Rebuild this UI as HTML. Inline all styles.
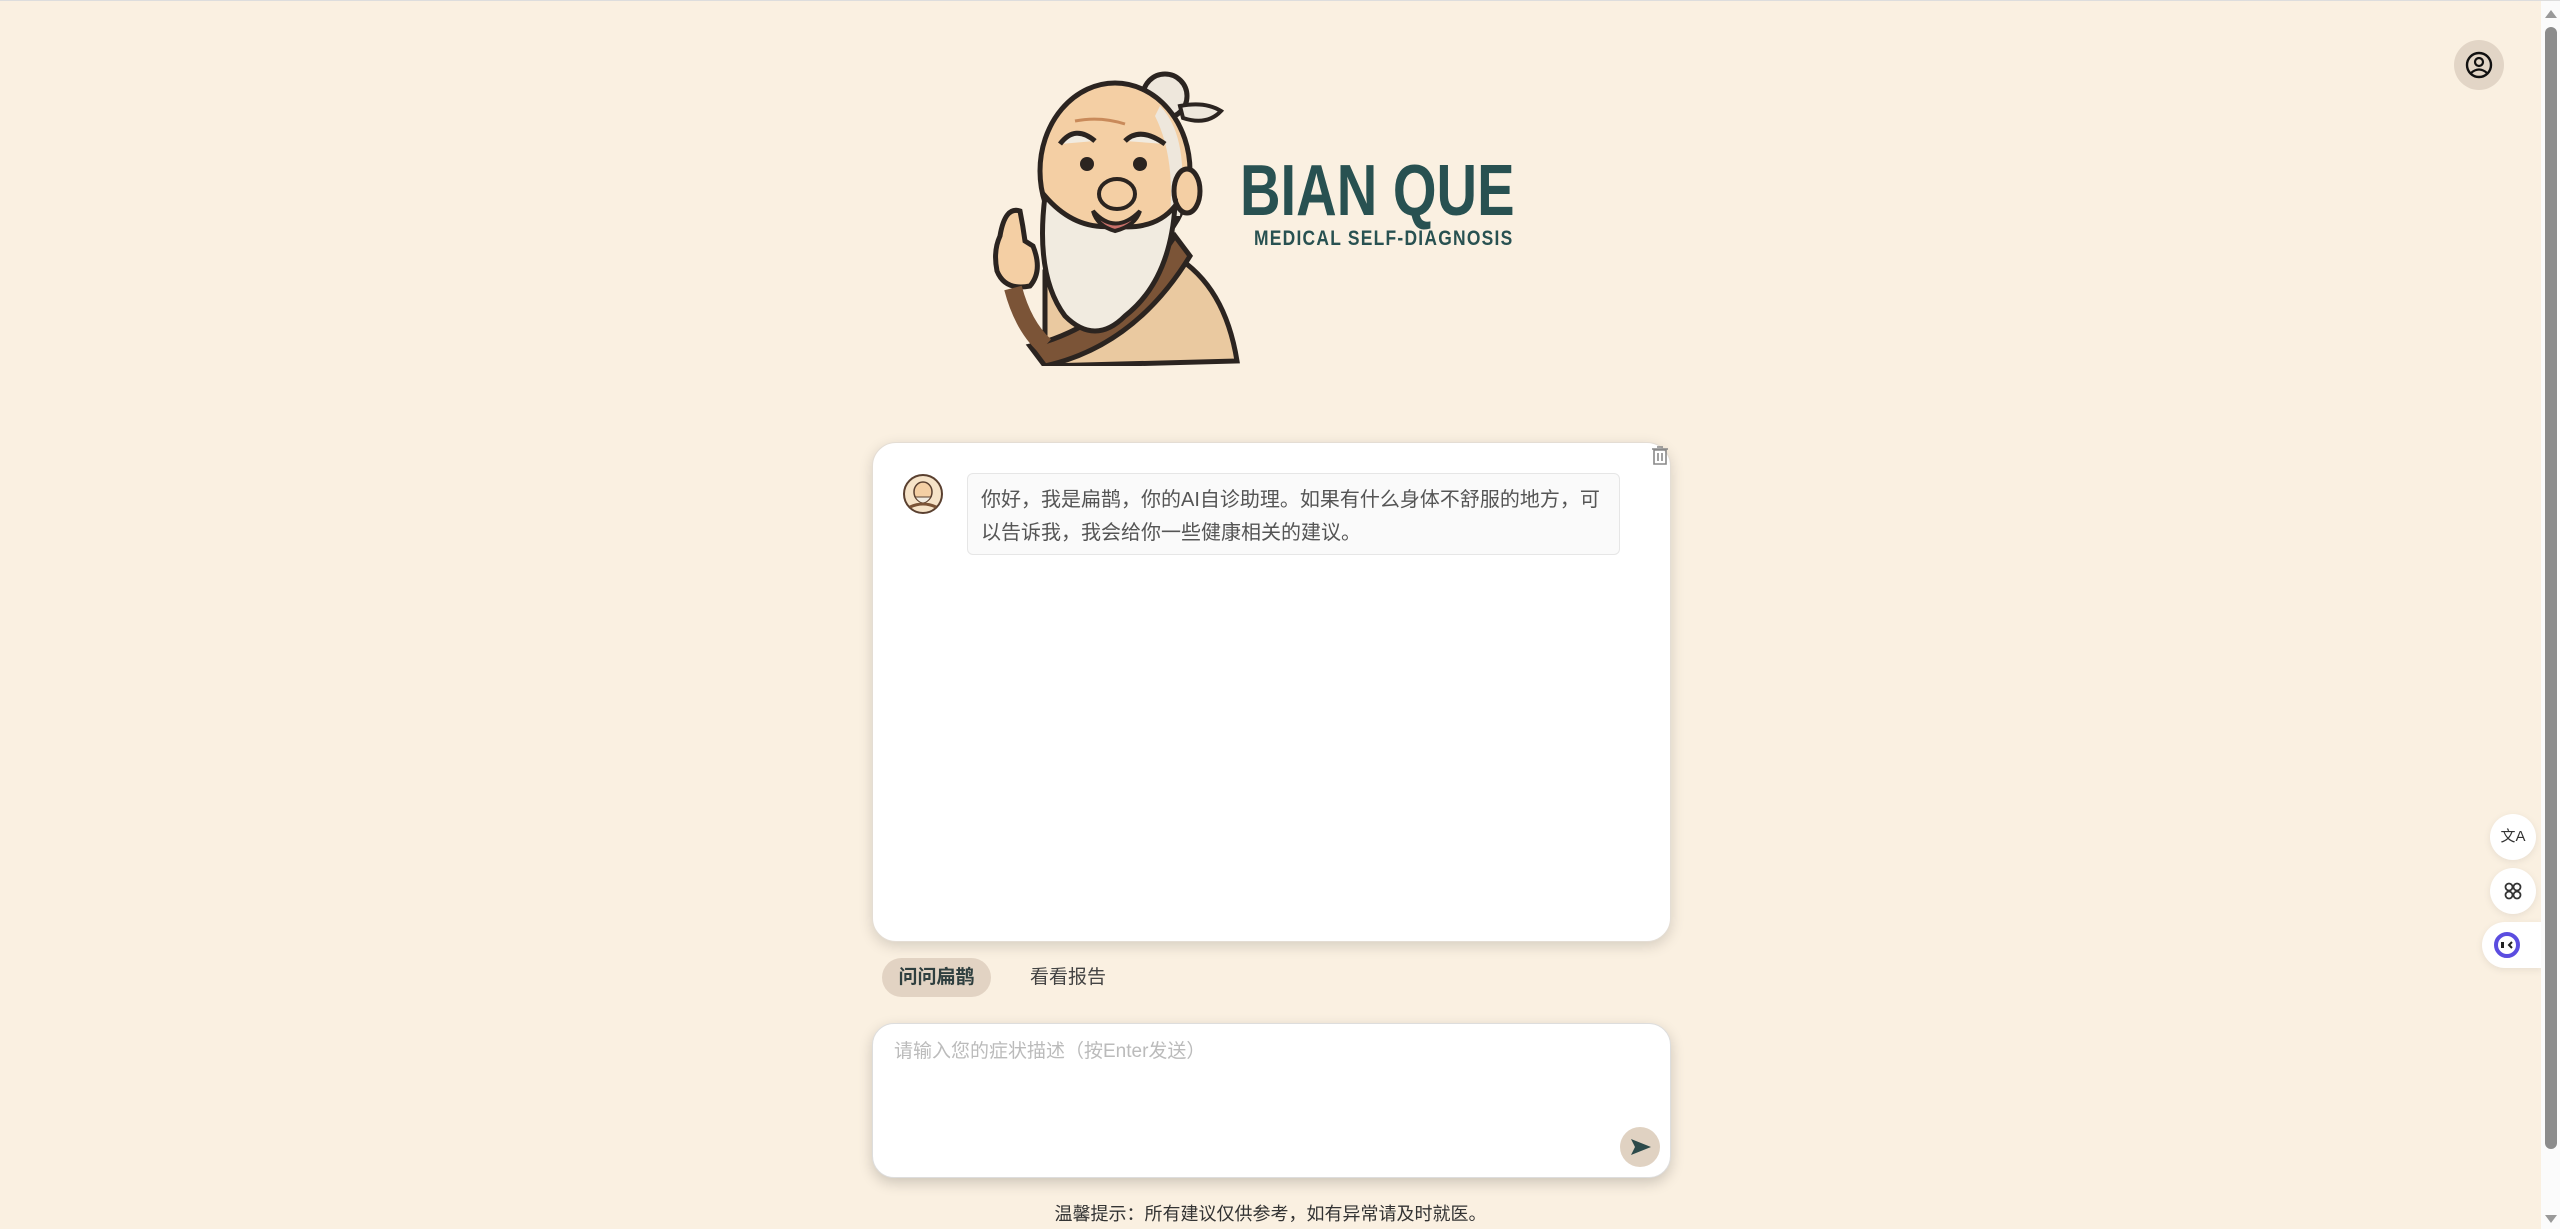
<!DOCTYPE html>
<html><head><meta charset="utf-8"><style>
*{margin:0;padding:0;box-sizing:border-box}
html,body{width:2560px;height:1229px;overflow:hidden}
body{background:#faf0e1;font-family:"Liberation Sans","Noto Sans CJK SC",sans-serif;position:relative;border-top:1px solid #ddd}
.abs{position:absolute}
.card{left:872px;top:441px;width:799px;height:500px;background:#fff;border-radius:24px;box-shadow:0 4px 14px rgba(0,0,0,.15);border:1px solid #e4ddd4}
.bubble{left:967px;top:472px;width:653px;height:82px;background:#fafafa;border:1px solid #e6e6e6;border-radius:6px;padding:10px 13px;font-size:20px;line-height:33px;color:#555}
.pill{left:882px;top:957px;width:109px;height:39px;background:#e2d3c3;border-radius:20px;font-size:19px;font-weight:bold;color:#2f3f3f;text-align:center;line-height:39px}
.tab2{left:1030px;top:957px;font-size:19px;line-height:39px;color:#444}
.inp{left:872px;top:1022px;width:799px;height:155px;background:#fff;border-radius:22px;box-shadow:0 5px 14px rgba(0,0,0,.18);border:1px solid #ddd}
.ph{left:894px;top:1036px;font-size:19px;color:#bbb;line-height:30px}
.send{left:1620px;top:1126px;width:40px;height:40px;border-radius:50%;background:#e0d2c2}
.foot{left:0;width:2541px;top:1199px;text-align:center;font-size:18px;color:#333}
.fab{width:46px;height:46px;border-radius:50%;background:#fff;box-shadow:0 2px 8px rgba(0,0,0,.08)}
</style></head><body>
<svg class="abs" style="left:975px;top:65px" width="270" height="300" viewBox="0 0 270 300">
 <path d="M70 300 L70 205 Q130 170 200 190 Q250 220 262 295 Z" fill="#eac9a0" stroke="#2b2420" stroke-width="5"/>
 <path d="M55 280 Q140 260 200 170 L215 190 Q160 280 70 300 Z" fill="#7b5437" stroke="#2b2420" stroke-width="5"/>
 <circle cx="190" cy="30" r="22" fill="#eee7dc" stroke="#2b2420" stroke-width="5"/>
 <path d="M205 40 Q230 35 246 45 Q232 60 208 52Z" fill="#eee7dc" stroke="#2b2420" stroke-width="4"/>
 <ellipse cx="140" cy="105" rx="75" ry="88" fill="#f4cfa4" stroke="#2b2420" stroke-width="5"/>
 <path d="M185 40 Q215 70 205 150 L195 150 Q200 90 180 50Z" fill="#eee7dc"/>
 <ellipse cx="212" cy="125" rx="13" ry="22" fill="#f4cfa4" stroke="#2b2420" stroke-width="5"/>
 <path d="M70 130 Q60 210 90 250 Q120 280 150 250 Q195 215 200 140 Q180 165 140 160 Q100 165 70 130Z" fill="#f1ebe0" stroke="#2b2420" stroke-width="5"/>
 <path d="M118 145 Q140 170 165 145 Q160 160 140 165 Q122 160 118 145Z" fill="#c9716a" stroke="#2b2420" stroke-width="4"/>
 <ellipse cx="142" cy="128" rx="18" ry="15" fill="#f4cfa4" stroke="#2b2420" stroke-width="4"/>
 <circle cx="112" cy="98" r="7" fill="#2b2420"/><circle cx="165" cy="98" r="7" fill="#2b2420"/>
 <path d="M85 78 Q100 58 120 75 M150 75 Q165 60 190 78" stroke="#2b2420" stroke-width="5" fill="#f1ebe0"/>
 <path d="M100 55 Q125 50 150 58" stroke="#c98a5a" stroke-width="3" fill="none"/>
 <path d="M25 170 Q30 140 45 145 Q48 160 50 175 L58 180 Q68 205 55 220 Q30 225 22 205 Q18 185 25 170Z" fill="#f4cfa4" stroke="#2b2420" stroke-width="5"/>
 <path d="M38 222 Q48 260 70 280" stroke="#7b5437" stroke-width="18" fill="none"/>
</svg>
<div class="abs" style="left:1240px;top:150px;font-size:72px;font-weight:bold;color:#285151;line-height:80px;transform:scaleX(0.78);transform-origin:0 0;white-space:nowrap">BIAN QUE</div>
<div class="abs" style="left:1254px;top:226px;font-size:21px;font-weight:bold;color:#285151;letter-spacing:1.5px;transform:scaleX(0.83);transform-origin:0 0;white-space:nowrap">MEDICAL SELF-DIAGNOSIS</div>

<div class="abs card"></div>
<svg class="abs" style="left:1650px;top:443px" width="20" height="24" viewBox="0 0 20 24"><path d="M4 6h12v14H4z M2 5h16 M7 3h6 M8 9v8 M12 9v8" stroke="#888" stroke-width="1.6" fill="none"/></svg>
<svg class="abs" style="left:902px;top:472px" width="42" height="42" viewBox="0 0 42 42"><circle cx="21" cy="21" r="19" fill="#f6e3c8" stroke="#5a4030" stroke-width="2"/><ellipse cx="21" cy="19" rx="9" ry="10" fill="#f4cfa4" stroke="#5a4030" stroke-width="1.5"/><path d="M13 24 Q21 36 29 24Z" fill="#f1ebe0" stroke="#5a4030"/><path d="M8 34 Q21 28 34 34" stroke="#7b5437" stroke-width="3" fill="none"/></svg>
<div class="abs bubble">你好，我是扁鹊，你的AI自诊助理。如果有什么身体不舒服的地方，可以告诉我，我会给你一些健康相关的建议。</div>

<div class="abs pill">问问扁鹊</div>
<div class="abs tab2">看看报告</div>

<div class="abs inp"></div>
<div class="abs ph">请输入您的症状描述（按Enter发送）</div>
<div class="abs send"><svg width="40" height="40" viewBox="0 0 40 40"><path d="M11 12 L31 20 L11 28 L15 20Z" fill="#2c4a4a"/></svg></div>
<div class="abs foot">温馨提示：所有建议仅供参考，如有异常请及时就医。</div>

<div class="abs" style="left:2454px;top:39px;width:50px;height:50px;border-radius:50%;background:#e2d5c6"><svg width="50" height="50" viewBox="0 0 50 50"><circle cx="25" cy="25" r="12" stroke="#111" stroke-width="2.4" fill="none"/><circle cx="25" cy="22" r="4" stroke="#111" stroke-width="2.2" fill="none"/><path d="M17 33 Q25 26 33 33" stroke="#111" stroke-width="2.2" fill="none"/></svg></div>

<div class="abs fab" style="left:2490px;top:813px;font-size:15px;text-align:center;line-height:46px;color:#333">文A</div>
<div class="abs fab" style="left:2490px;top:867px"><svg width="46" height="46" viewBox="0 0 46 46"><g stroke="#333" stroke-width="1.8" fill="none"><circle cx="19" cy="19" r="3.5"/><circle cx="27" cy="19" r="3.5"/><circle cx="19" cy="27" r="3.5"/><circle cx="27" cy="27" r="3.5"/></g></svg></div>
<div class="abs" style="left:2482px;top:921px;width:60px;height:46px;border-radius:23px 0 0 23px;background:#fff;box-shadow:0 2px 8px rgba(0,0,0,.08)"><svg width="46" height="46" viewBox="0 0 46 46"><circle cx="25" cy="23" r="11" fill="#fff" stroke="#5b4de0" stroke-width="4"/><rect x="19" y="20" width="3" height="6" fill="#222"/><path d="M30 20 L27 23 L30 26" stroke="#222" stroke-width="2" fill="none"/></svg></div>

<div class="abs" style="left:2541px;top:0;width:19px;height:1229px;background:#fbfbfb"></div>
<div class="abs" style="left:2545px;top:26px;width:12px;height:1122px;background:#8c8c8c;border-radius:6px"></div>
<svg class="abs" style="left:2545px;top:8px" width="12" height="10"><path d="M0 9 L6 1 L12 9Z" fill="#999"/></svg>
<svg class="abs" style="left:2545px;top:1213px" width="12" height="10"><path d="M0 1 L6 9 L12 1Z" fill="#999"/></svg>
</body></html>
